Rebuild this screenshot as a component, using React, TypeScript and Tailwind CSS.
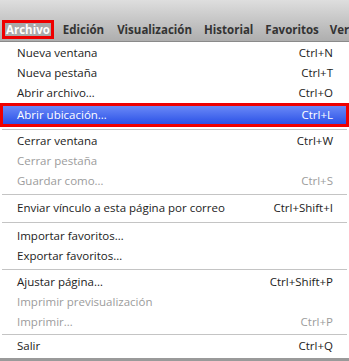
import React from "react";

type Row = { label: string; shortcut?: string; disabled?: boolean; active?: boolean };
type Item = Row | { sep: number };

const items: Item[] = [
  { label: "Nueva ventana", shortcut: "Ctrl+N" },
  { label: "Nueva pestaña", shortcut: "Ctrl+T" },
  { label: "Abrir archivo…", shortcut: "Ctrl+O" },
  { label: "Abrir ubicación…", shortcut: "Ctrl+L", active: true },
  { sep: 4 },
  { label: "Cerrar ventana", shortcut: "Ctrl+W" },
  { label: "Cerrar pestaña", disabled: true },
  { label: "Guardar como…", shortcut: "Ctrl+S", disabled: true },
  { sep: 7 },
  { label: "Enviar vínculo a esta página por correo", shortcut: "Ctrl+Shift+I" },
  { sep: 8 },
  { label: "Importar favoritos…" },
  { label: "Exportar favoritos…" },
  { sep: 6 },
  { label: "Ajustar página…", shortcut: "Ctrl+Shift+P" },
  { label: "Imprimir previsualización", disabled: true },
  { label: "Imprimir…", shortcut: "Ctrl+P", disabled: true },
  { sep: 4 },
  { label: "Salir", shortcut: "Ctrl+Q" },
];

function Sep({ h }: { h: number }) {
  const cls =
    h === 4 ? "h-[4px]" : h === 6 ? "h-[6px]" : h === 7 ? "h-[7px]" : "h-[8px]";
  return (
    <div className={`${cls} flex items-center px-[2px]`}>
      <div className="h-px w-full bg-[#c4c4c4]" />
    </div>
  );
}

export default function App() {
  return (
    <div
      className="w-[349px] h-[361px] overflow-hidden bg-white text-[#222] flex flex-col"
      style={{ fontFamily: '"Open Sans", "Noto Sans", sans-serif' }}
    >
      <div className="h-[42px] shrink-0 flex items-end bg-gradient-to-b from-[#dedede] to-[#aeaeae] border-b border-[#8a8a8a]">
        <div className="flex items-center h-[19px] mb-[2px] text-[11.5px] font-bold text-[#333] whitespace-nowrap">
          <div className="ml-[2px] h-[19px] px-[3px] flex items-center bg-[#e00]">
            <span className="bg-[#a9a9a9] text-white px-[1px] leading-[13px]">Archivo</span>
          </div>
          <span className="ml-[9px]">Edición</span>
          <span className="ml-[13px]">Visualización</span>
          <span className="ml-[12px]">Historial</span>
          <span className="ml-[12px]">Favoritos</span>
          <span className="ml-[11px]">Ver</span>
        </div>
      </div>
      <div className="pt-[1px] text-[11.5px] flex-1 flex flex-col">
        {items.map((it, i) =>
          "sep" in it ? (
            <Sep key={i} h={it.sep} />
          ) : it.active ? (
            <div
              key={i}
              className="h-[24px] shrink-0 border-[3px] border-[#e00] bg-gradient-to-b from-[#6a88f7] to-[#2d50e6] text-white flex items-center justify-between pl-[14px] pr-[13px]"
            >
              <span>{it.label}</span>
              <span>{it.shortcut}</span>
            </div>
          ) : (
            <div
              key={i}
              className={`h-[20px] shrink-0 flex items-center justify-between pl-[17px] pr-[16px] ${
                it.disabled ? "text-[#9c9c9c]" : "text-[#222]"
              }`}
            >
              <span>{it.label}</span>
              {it.shortcut ? <span>{it.shortcut}</span> : null}
            </div>
          )
        )}
        <div className="flex-1" />
        <div className="h-[3px] shrink-0 bg-[#9a9a9a]" />
      </div>
    </div>
  );
}
